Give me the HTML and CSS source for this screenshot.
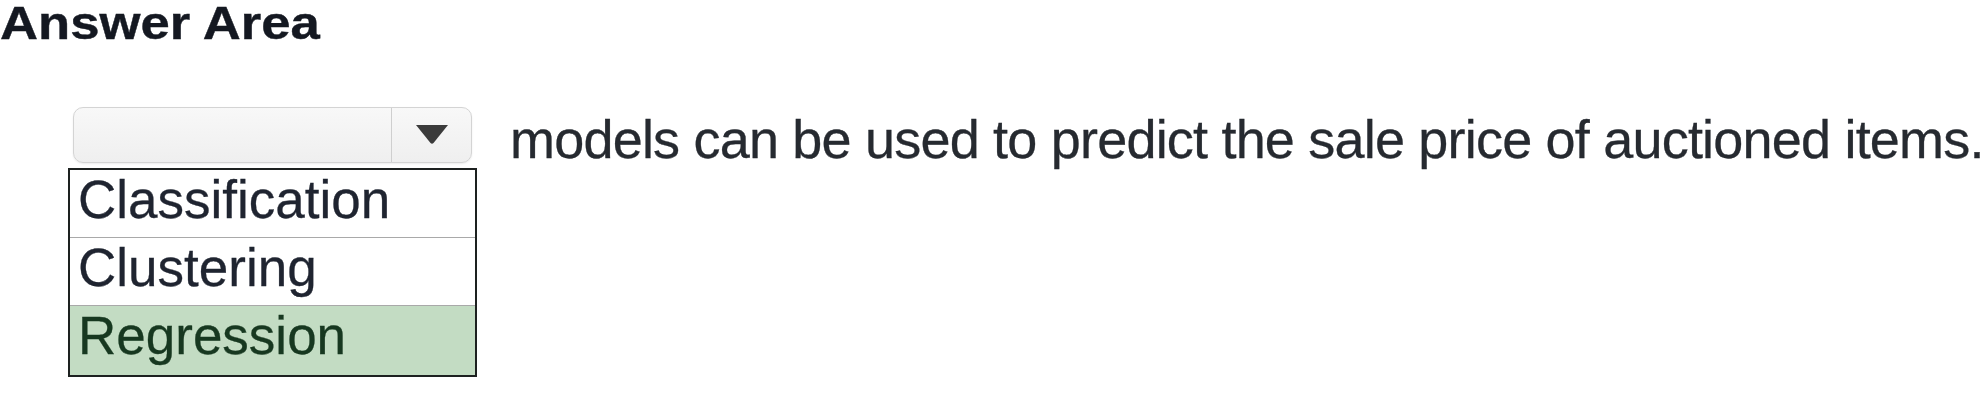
FILE: index.html
```html
<!DOCTYPE html>
<html lang="en">
<head>
<meta charset="utf-8">
<title>Answer Area</title>
<link rel="stylesheet" href="styles.css">
</head>
<body>
<h1 class="title">Answer Area</h1>
<div class="answer-row">
  <div class="select-col">
    <div class="select">
      <div class="select-value"></div>
      <div class="select-button">
        <svg class="arrow" width="32" height="19" viewBox="0 0 32 19"><path d="M0 0 H32 L17.5 18 Q16 19.5 14.5 18 Z" fill="#3b3b3b"/></svg>
      </div>
    </div>
    <ul class="options">
      <li class="option">Classification</li>
      <li class="option">Clustering</li>
      <li class="option selected">Regression</li>
    </ul>
  </div>
  <p class="sentence">models can be used to predict the sale price of auctioned items.</p>
</div>
</body>
</html>
```
FILE: styles.css
```css
html, body {
  margin: 0;
  padding: 0;
  background: #ffffff;
}
body {
  font-family: "Liberation Sans", Arial, sans-serif;
  color: #262a30;
  overflow: hidden;
  width: 1980px;
  height: 402px;
}
.title {
  margin: 0;
  width: max-content;
  font-size: 47px;
  line-height: 46px;
  height: 44px;
  font-weight: bold;
  color: #141821;
  transform: scaleX(1.12);
  transform-origin: left top;
  -webkit-text-stroke: 0.4px #141821;
}
.answer-row {
  display: flex;
  align-items: flex-start;
  margin-top: 63px;
  padding-left: 68px;
}
.select-col {
  width: 409px;
  flex: none;
}
.select {
  display: flex;
  height: 54px;
  margin: 0 5px;
  border: 1px solid #d4d4d4;
  border-radius: 10px;
  background: linear-gradient(#f8f8f8, #efefef);
  box-shadow: 0 1px 2px rgba(0,0,0,0.08);
}
.select-value {
  flex: 1;
  border-right: 1px solid #cfcfcf;
}
.select-button {
  width: 79px;
  display: flex;
  justify-content: center;
  align-items: flex-start;
  padding-top: 17px;
  box-sizing: border-box;
}
.options {
  list-style: none;
  margin: 5px 0 0;
  padding: 0;
  border: 2px solid #1d2120;
}
.option {
  height: 68px;
  padding: 1px 8px 0;
  font-size: 53px;
  line-height: 58px;
  box-sizing: border-box;
  border-bottom: 1px solid #a9a9a9;
  color: #1f2430;
  -webkit-text-stroke: 0.3px #1f2430;
}
.option:last-child {
  border-bottom: none;
  height: 69px;
}
.option.selected {
  background: #c3dcc3;
  color: #173820;
  -webkit-text-stroke: 0.3px #173820;
}
.sentence {
  margin: 4px 0 0 33px;
  font-size: 54px;
  line-height: 56px;
  letter-spacing: -0.8px;
  white-space: nowrap;
  color: #262a30;
  -webkit-text-stroke: 0.3px #262a30;
}
```
